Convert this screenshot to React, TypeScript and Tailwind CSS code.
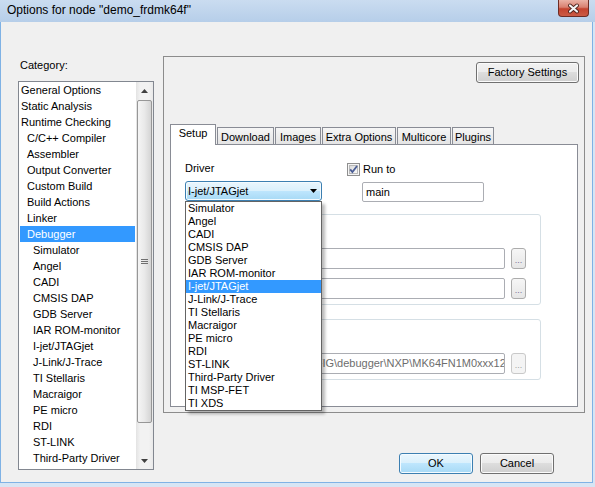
import React from "react";

// IAR "Options for node" dialog, Win7 basic look

const categories: { label: string; level: number }[] = [
  { label: "General Options", level: 0 },
  { label: "Static Analysis", level: 0 },
  { label: "Runtime Checking", level: 0 },
  { label: "C/C++ Compiler", level: 1 },
  { label: "Assembler", level: 1 },
  { label: "Output Converter", level: 1 },
  { label: "Custom Build", level: 1 },
  { label: "Build Actions", level: 1 },
  { label: "Linker", level: 1 },
  { label: "Debugger", level: 1 },
  { label: "Simulator", level: 2 },
  { label: "Angel", level: 2 },
  { label: "CADI", level: 2 },
  { label: "CMSIS DAP", level: 2 },
  { label: "GDB Server", level: 2 },
  { label: "IAR ROM-monitor", level: 2 },
  { label: "I-jet/JTAGjet", level: 2 },
  { label: "J-Link/J-Trace", level: 2 },
  { label: "TI Stellaris", level: 2 },
  { label: "Macraigor", level: 2 },
  { label: "PE micro", level: 2 },
  { label: "RDI", level: 2 },
  { label: "ST-LINK", level: 2 },
  { label: "Third-Party Driver", level: 2 },
];

const indent = ["pl-[1px]", "pl-[7px]", "pl-[13px]"];

const drivers = [
  "Simulator",
  "Angel",
  "CADI",
  "CMSIS DAP",
  "GDB Server",
  "IAR ROM-monitor",
  "I-jet/JTAGjet",
  "J-Link/J-Trace",
  "TI Stellaris",
  "Macraigor",
  "PE micro",
  "RDI",
  "ST-LINK",
  "Third-Party Driver",
  "TI MSP-FET",
  "TI XDS",
];

const tabs = [
  { label: "Download", w: "w-[57px]" },
  { label: "Images", w: "w-[46px]" },
  { label: "Extra Options", w: "w-[74px]" },
  { label: "Multicore", w: "w-[54px]" },
  { label: "Plugins", w: "w-[42px]" },
];

const grayBtn =
  "border border-[#707070] rounded-[3px] bg-[linear-gradient(#f2f2f2_0%,#ebebeb_50%,#dddddd_50%,#cfcfcf_100%)] shadow-[inset_0_0_0_1px_#fbfbfb] flex items-center justify-center";

const blueBtn =
  "border border-[#3c7fb1] rounded-[3px] bg-[linear-gradient(#eaf6fd_0%,#d9f0fc_50%,#bee6fd_50%,#a7d9f5_100%)] shadow-[inset_0_0_0_1px_#f4fbff]";

function DotsButton({ disabled }: { disabled?: boolean }) {
  return (
    <div
      className={`w-[15px] h-[21px] rounded-[3px] border flex items-end justify-center pb-[3px] text-[9px] leading-[9px] ${
        disabled
          ? "border-[#c9c9c9] bg-[#f4f4f4] text-[#a0a0a0]"
          : "border-[#acacac] bg-[linear-gradient(#f6f6f6,#e6e6e6)] text-[#7b6f9a]"
      }`}
    >
      ...
    </div>
  );
}

function Arrow({ down }: { down?: boolean }) {
  return (
    <svg width="7" height="4" viewBox="0 0 7 4">
      <path d={down ? "M0 0 L7 0 L3.5 4Z" : "M0 4 L7 4 L3.5 0Z"} fill="#404040" />
    </svg>
  );
}

export default function App() {
  return (
    <div className="w-[595px] h-[487px] bg-[#d7e5f4] flex flex-col overflow-hidden text-[11px] text-black font-['Liberation_Sans',Arial,sans-serif]">
      {/* title bar */}
      <div className="h-[22px] flex justify-between bg-[linear-gradient(#cadcf0,#b6cee9)]">
        <span className="pl-[7px] text-[12px] leading-[21px]">Options for node "demo_frdmk64f"</span>
        <div className="mr-[6px] w-[31px] h-[17px] rounded-b-[4px] border border-t-0 border-[#6e2c24] bg-[linear-gradient(#ebb2a6,#d98070_45%,#c4432f_55%,#cb5b45)] flex items-center justify-center">
          <svg width="15" height="11" viewBox="0 0 15 11">
            <path d="M4 2.5 L11 8.5 M11 2.5 L4 8.5" stroke="#4a1f1a" strokeWidth="3.8" strokeLinecap="round" />
            <path d="M4 2.5 L11 8.5 M11 2.5 L4 8.5" stroke="#f4f4f4" strokeWidth="2.2" strokeLinecap="round" />
          </svg>
        </div>
      </div>

      {/* dialog body */}
      <div className="flex-1 mr-[2px] mb-[4px] bg-[#f0f0f0] border-x border-b border-[#7fb2e5] flex">
        {/* category column */}
        <div className="pl-[17px] pt-[37px]">
          <div className="pl-[2px] leading-[13px]">Category:</div>
          <div className="mt-[9px] w-[136px] h-[389px] border border-[#828790] bg-white flex">
            <div className="w-[117px]">
              {categories.map((c) => (
                <div
                  key={c.label}
                  className={`ml-[1px] w-[115px] h-[16px] leading-[16px] whitespace-nowrap ${indent[c.level]} ${
                    c.label === "Debugger" ? "bg-[#3399ff] text-white" : ""
                  }`}
                >
                  {c.label}
                </div>
              ))}
            </div>
            <div className="w-[17px] flex flex-col bg-[linear-gradient(90deg,#e3e3e3,#f2f2f2_25%,#f2f2f2_75%,#e9e9e9)]">
              <div className="h-[17px] flex items-center justify-center">
                <Arrow />
              </div>
              <div className="mx-[1px] mt-[1px] h-[323px] rounded-[2px] border border-[#979797] bg-[linear-gradient(90deg,#f5f5f5,#e9e9e9_50%,#d4d4d4)] flex items-center justify-center">
                <svg width="7" height="6" viewBox="0 0 7 6">
                  <path d="M0 0.5 H7 M0 2.5 H7 M0 4.5 H7" stroke="#6f6f6f" strokeWidth="1" />
                </svg>
              </div>
              <div className="flex-1" />
              <div className="h-[17px] flex items-center justify-center">
                <Arrow down />
              </div>
            </div>
          </div>
        </div>

        {/* options column */}
        <div className="pl-[9px] pt-[34px] flex flex-col">
          <div className="w-[422px] h-[357px] border border-[#8c8c8c] flex flex-col">
            <div className="flex justify-end pt-[5px] pr-[5px]">
              <button className={`w-[103px] h-[21px] ${grayBtn}`}>Factory Settings</button>
            </div>

            {/* tabs */}
            <div className="mt-[41px] ml-[6px] h-[20px] flex items-end gap-[1px]">
              <div className="relative z-10 w-[46px] h-[21px] -mb-[1px] border border-b-0 border-[#898c95] bg-white text-center pt-[2px] leading-[13px]">
                Setup
              </div>
              {tabs.map((t) => (
                <div
                  key={t.label}
                  className={`${t.w} h-[17px] border border-b-0 border-[#898c95] bg-[linear-gradient(#f6f6f6,#e4e4e4)] text-center pt-[3px] leading-[13px] whitespace-nowrap`}
                >
                  {t.label}
                </div>
              ))}
            </div>

            {/* tab pane */}
            <div className="mx-[6px] h-[263px] border border-[#898c95] bg-white pl-[14px] pt-[17px]">
              <div className="flex">
                <div className="w-[137px]">
                  <div className="leading-[13px]">Driver</div>
                  <div className="relative z-20 mt-[6px]">
                    <div className={`h-[20px] flex items-center justify-between pl-[2px] pr-[4px] ${blueBtn}`}>
                      <span>I-jet/JTAGjet</span>
                      <svg width="7" height="4" viewBox="0 0 7 4">
                        <path d="M0 0 L7 0 L3.5 4Z" fill="#000" />
                      </svg>
                    </div>
                    <div className="absolute top-full left-0 w-[137px] border border-[#646464] bg-white shadow-[3px_3px_3px_rgba(0,0,0,0.28)]">
                      {drivers.map((d) => (
                        <div
                          key={d}
                          className={`h-[13px] leading-[13px] pl-[2px] whitespace-nowrap ${
                            d === "I-jet/JTAGjet" ? "bg-[#3399ff] text-white" : ""
                          }`}
                        >
                          {d}
                        </div>
                      ))}
                    </div>
                  </div>
                </div>

                <div className="ml-[25px]">
                  <div className="mt-[1px] h-[13px] flex items-center">
                    <svg width="13" height="13" viewBox="0 0 13 13">
                      <defs>
                        <linearGradient id="cb" x1="0" y1="0" x2="1" y2="1">
                          <stop offset="0" stopColor="#d8d8d8" />
                          <stop offset="1" stopColor="#fbfbfb" />
                        </linearGradient>
                      </defs>
                      <rect x="0.5" y="0.5" width="12" height="12" fill="#f5f5f5" stroke="#8f8f8f" />
                      <rect x="2.5" y="2.5" width="8" height="8" fill="url(#cb)" stroke="#b9b9b9" />
                      <path d="M3.2 6.4 L5.4 9 L10 3" stroke="#4a5d95" strokeWidth="1.8" fill="none" />
                    </svg>
                    <span className="ml-[3px] leading-[13px]">Run to</span>
                  </div>
                  <div className="ml-[15px] mt-[6px] w-[122px] h-[20px] rounded-[2px] border border-[#abadb3] bg-white pl-[3px] leading-[18px]">
                    main
                  </div>
                </div>
              </div>

              {/* setup macros group (mostly under the open list) */}
              <div className="mt-[12px] w-[356px] h-[91px] rounded-[3px] border border-[#d5dfe5] pt-[33px] pl-[14px]">
                <div className="flex gap-[6px]">
                  <div className="w-[305px] h-[21px] rounded-[2px] border border-[#abadb3] bg-white" />
                  <DotsButton />
                </div>
                <div className="mt-[9px] flex gap-[6px]">
                  <div className="w-[305px] h-[21px] rounded-[2px] border border-[#abadb3] bg-white" />
                  <DotsButton />
                </div>
              </div>

              {/* device description group */}
              <div className="mt-[14px] w-[356px] h-[61px] rounded-[3px] border border-[#d5dfe5] pt-[33px] pl-[14px]">
                <div className="flex gap-[6px]">
                  <div className="w-[305px] h-[21px] rounded-[2px] border border-[#abadb3] bg-white pl-[3px] leading-[19px] overflow-hidden whitespace-nowrap text-[#6d6d6d]">
                    $TOOLKIT_DIR$\CONFIG\debugger\NXP\MK64FN1M0xxx12.ddf
                  </div>
                  <DotsButton disabled />
                </div>
              </div>
            </div>
          </div>

          <div className="mt-[40px] pr-[31px] flex justify-end gap-[7px]">
            <button className={`w-[74px] h-[21px] flex items-center justify-center ${blueBtn}`}>OK</button>
            <button className={`w-[74px] h-[21px] ${grayBtn}`}>Cancel</button>
          </div>
        </div>
      </div>
    </div>
  );
}
